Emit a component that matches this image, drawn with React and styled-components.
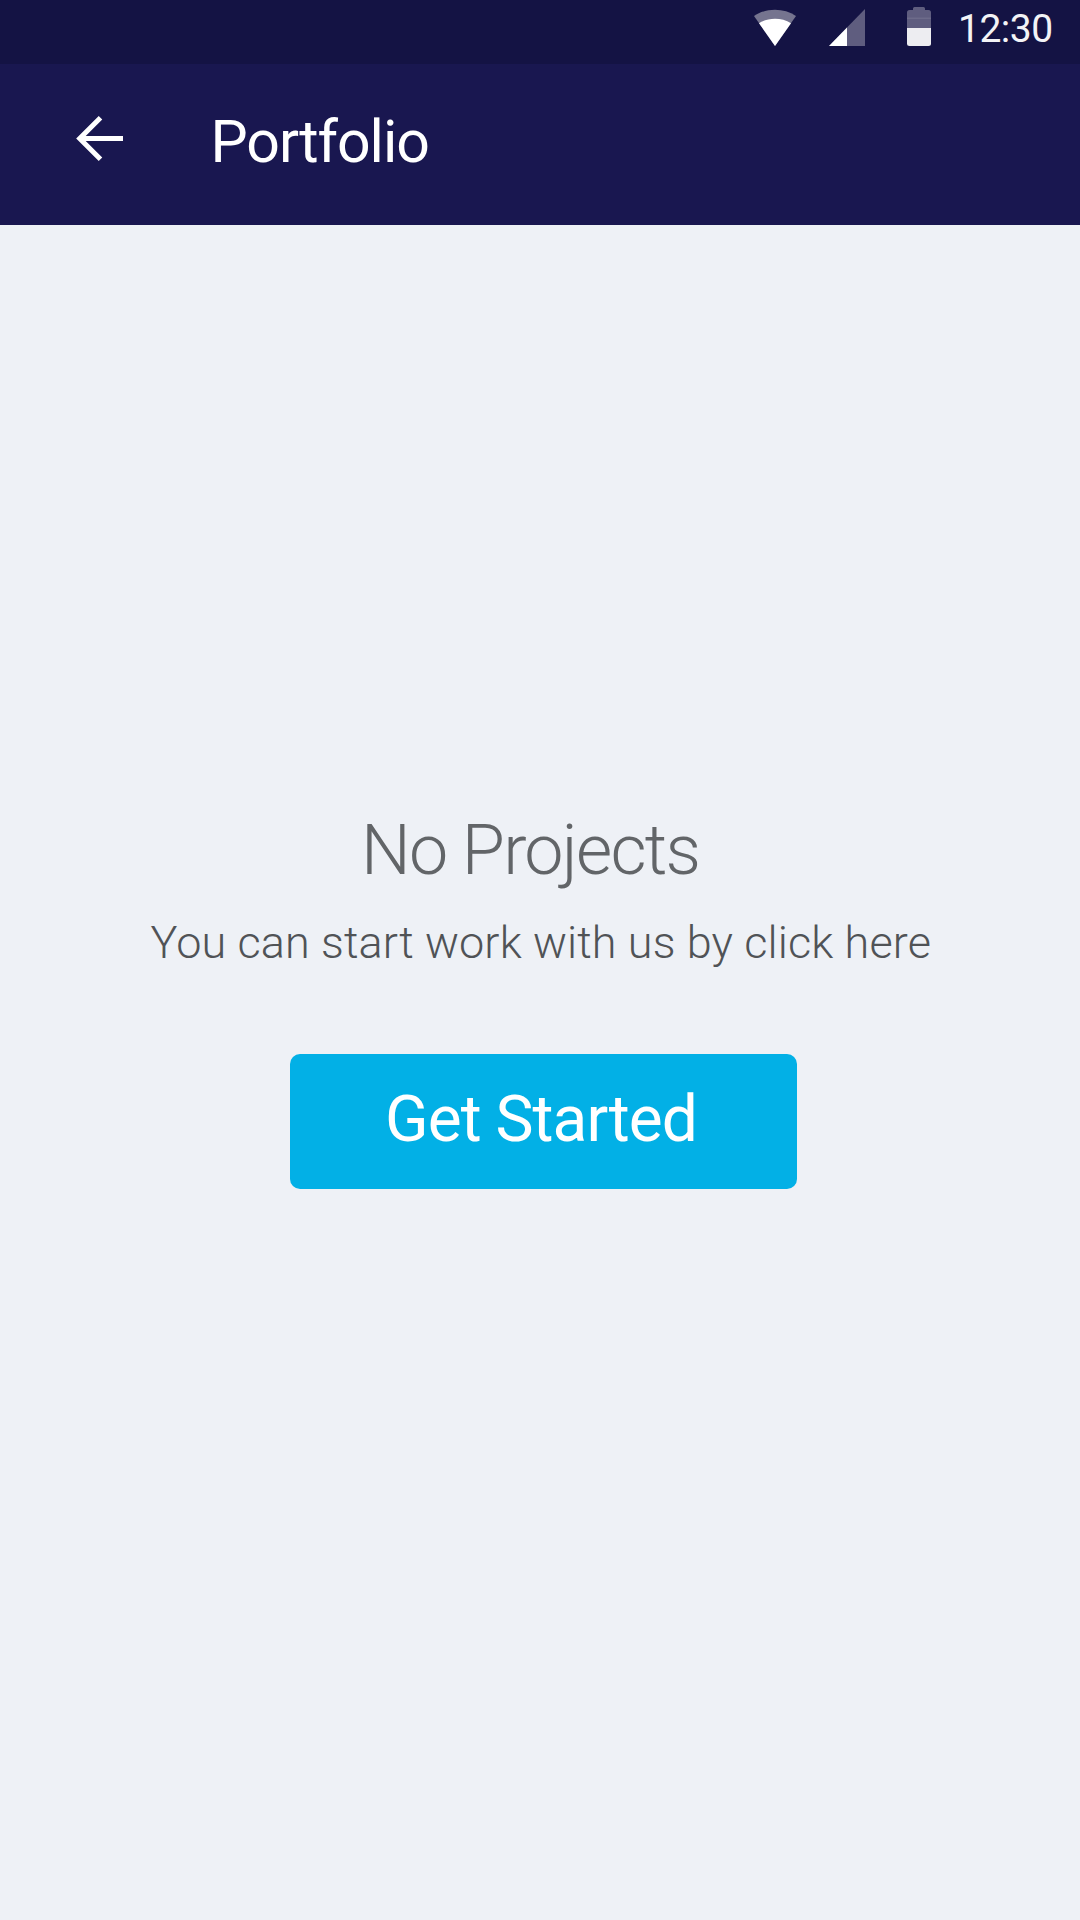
import React from "react";
import styled, { createGlobalStyle } from "styled-components";

const GlobalStyle = createGlobalStyle`
  *, *::before, *::after { box-sizing: border-box; }
  body { margin: 0; background: #eef1f6; }
`;

const Screen = styled.div`
  display: flex;
  flex-direction: column;
  width: 1080px;
  height: 1920px;
  background: #eef1f6;
  font-family: Roboto, "Liberation Sans", sans-serif;
  overflow: hidden;
`;

const StatusBar = styled.div`
  display: flex;
  flex: none;
  align-items: flex-start;
  height: 64px;
  padding-left: 753px;
  background: #141344;
`;

const StatusIcon = styled.svg`
  display: block;
  flex: none;
  width: ${(p) => p.$width}px;
  height: 48px;
  margin-right: ${(p) => p.$gap}px;
`;

const Clock = styled.time`
  color: #f3f3f6;
  font-size: 39px;
  line-height: 59px;
  letter-spacing: -0.5px;
  white-space: nowrap;
`;

const AppBar = styled.header`
  display: flex;
  flex: none;
  align-items: flex-start;
  height: 161px;
  padding-left: 74px;
  background: #191750;
`;

const BackButton = styled.button`
  display: block;
  flex: none;
  width: 52px;
  height: 48px;
  margin: 50px 84.5px 0 0;
  padding: 0;
  border: 0;
  background: none;
`;

const Title = styled.h1`
  margin: 40px 0 0;
  color: #fff;
  font-size: 59px;
  font-weight: 400;
  line-height: 76px;
  letter-spacing: -1.05px;
  white-space: nowrap;
`;

const EmptyState = styled.main`
  display: flex;
  flex: 1;
  flex-direction: column;
  align-items: flex-start;
  padding-top: 584px;
`;

const Heading = styled.h2`
  margin: 0 0 25px 361px;
  color: #626568;
  font-size: 70px;
  font-weight: 300;
  line-height: 82px;
  letter-spacing: -1.75px;
  white-space: nowrap;
`;

const Message = styled.p`
  margin: 0 0 84px 150.5px;
  color: #505356;
  font-size: 45px;
  font-weight: 300;
  line-height: 54px;
  letter-spacing: 0.13px;
  white-space: nowrap;
`;

const PrimaryButton = styled.button`
  display: flex;
  align-items: flex-start;
  width: 507px;
  height: 135px;
  margin-left: 290px;
  padding: 27px 0 0 95px;
  border: 0;
  border-radius: 10px;
  background: #02b0e6;
  color: #fff;
  font-family: inherit;
  font-size: 64px;
  font-weight: 400;
  line-height: 78px;
  letter-spacing: -0.95px;
  white-space: nowrap;
`;

function WifiIcon() {
  return (
    <StatusIcon $width={44} $gap={32} viewBox="0 0 44 48">
      <path d="M1 16C13 7.8 31 7.8 43 16L22 46Z" fill="#75748f" />
      <path d="M6 23.2C15.5 17.4 28.500 17.4 38 23.2L22 46Z" fill="#fff" />
    </StatusIcon>
  );
}

function SignalIcon() {
  return (
    <StatusIcon $width={37} $gap={40} viewBox="0 0 37 48">
      <path d="M0 46L36 9V46Z" fill="#5f5d7f" />
      <path d="M0 46L18 27.500V46Z" fill="#fff" />
    </StatusIcon>
  );
}

function BatteryIcon() {
  return (
    <StatusIcon $width={26} $gap={26} viewBox="0 0 26 48">
      <path d="M7 10V8.500Q7 7 8.500 7H17.500Q19 7 19 8.500V10H22.500Q25 10 25 12.500V28H1V12.500Q1 10 3.500 10Z" fill="#5f5d7f" />
      <path d="M1 17.500H25V19H1Z" fill="#6d6b8a" />
      <path d="M1 28H25V43.500Q25 46 22.500 46H3.500Q1 46 1 43.500Z" fill="#ededf1" />
    </StatusIcon>
  );
}

function BackIcon() {
  return (
    <svg width="52" height="48" viewBox="0 0 52 48" fill="none" stroke="#fff" strokeWidth="5">
      <path d="M26.500 3.700L5.700 24.500L26.500 45.300M6 24.500H49" />
    </svg>
  );
}

export default function App() {
  return (
    <Screen>
      <GlobalStyle />
      <StatusBar>
        <WifiIcon />
        <SignalIcon />
        <BatteryIcon />
        <Clock>12:30</Clock>
      </StatusBar>
      <AppBar>
        <BackButton aria-label="Back">
          <BackIcon />
        </BackButton>
        <Title>Portfolio</Title>
      </AppBar>
      <EmptyState>
        <Heading>No Projects</Heading>
        <Message>You can start work with us by click here</Message>
        <PrimaryButton>Get Started</PrimaryButton>
      </EmptyState>
    </Screen>
  );
}
